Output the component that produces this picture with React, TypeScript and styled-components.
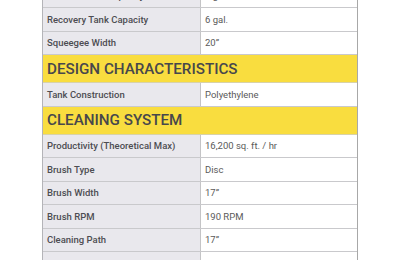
import React from "react";
import styled, { createGlobalStyle } from "styled-components";

const Global = createGlobalStyle`
  html, body { margin: 0; padding: 0; background: #ffffff; }
  body { font-family: Roboto, "Liberation Sans", sans-serif; overflow: hidden; }
`;

const Table = styled.div`
  margin: -15.5px 0 0 42px;
  width: 316px;
  box-sizing: border-box;
  border-left: 1px solid #b4b4b8;
  border-right: 1px solid #a8a8a8;
`;

const Row = styled.div`
  display: grid;
  grid-template-columns: 157px 1fr;
  height: 23.5px;
  box-sizing: border-box;
  border-bottom: 1px solid #c9c9cc;
`;

const Label = styled.div`
  background: #e9e8ed;
  color: #4d4d52;
  font-size: 9.5px;
  font-weight: 500;
  padding-left: 4px;
  display: flex;
  align-items: center;
`;

const Value = styled.div`
  background: #ffffff;
  color: #5a5a5a;
  font-size: 9.5px;
  font-weight: 400;
  padding-left: 4px;
  border-left: 1px solid #c4c4c6;
  display: flex;
  align-items: center;
`;

const Heading = styled.div`
  height: 28px;
  box-sizing: border-box;
  background: #f9dd3f;
  color: #47474c;
  font-size: 15.2px;
  font-weight: 500;
  padding-left: 4px;
  display: flex;
  align-items: center;
  border-bottom: 1px solid #d8d2a8;
`;

type Spec = { label: string; value: string };

const groups: { title?: string; rows: Spec[] }[] = [
  {
    rows: [
      { label: "Solution Tank Capacity", value: "6 gal." },
      { label: "Recovery Tank Capacity", value: "6 gal." },
      { label: "Squeegee Width", value: "20\u201D" },
    ],
  },
  {
    title: "DESIGN CHARACTERISTICS",
    rows: [{ label: "Tank Construction", value: "Polyethylene" }],
  },
  {
    title: "CLEANING SYSTEM",
    rows: [
      { label: "Productivity (Theoretical Max)", value: "16,200 sq. ft. / hr" },
      { label: "Brush Type", value: "Disc" },
      { label: "Brush Width", value: "17\u201D" },
      { label: "Brush RPM", value: "190 RPM" },
      { label: "Cleaning Path", value: "17\u201D" },
      { label: "Brush Down Pressure", value: "50 lbs." },
    ],
  },
];

export default function App() {
  return (
    <>
      <Global />
      <Table>
        {groups.map((g, gi) => (
          <React.Fragment key={gi}>
            {g.title && <Heading>{g.title}</Heading>}
            {g.rows.map((r) => (
              <Row key={r.label}>
                <Label>{r.label}</Label>
                <Value>{r.value}</Value>
              </Row>
            ))}
          </React.Fragment>
        ))}
      </Table>
    </>
  );
}
